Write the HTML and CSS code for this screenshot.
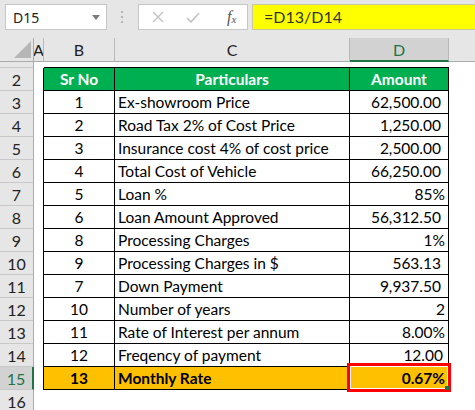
FILE: index.html
```html
<html>
<head>
<meta charset="utf-8">
<link rel="stylesheet" href="styles.css">
</head>
<body>

<div class="topbar">
    <div class="namebox">
        <span>D15</span>
        <svg class="caret" width="8" height="5" viewBox="0 0 8 5"><path d="M0 0h8L4 5z" fill="#7a7a7a"/></svg>
    </div>
    <div class="dots">
        <svg width="3" height="13" viewBox="0 0 3 13"><rect x="0" y="0" width="2" height="2" fill="#b4b4b4"/><rect x="0" y="5" width="2" height="2" fill="#b4b4b4"/><rect x="0" y="10" width="2" height="2" fill="#b4b4b4"/></svg>
    </div>
    <div class="fxbox">
        <svg class="ico" width="12" height="12" viewBox="0 0 12 12"><path d="M1 1L11 11M11 1L1 11" stroke="#c2c2c2" stroke-width="1.4" fill="none"/></svg>
        <svg class="ico" width="14" height="11" viewBox="0 0 14 11"><path d="M1 6L5 10L13 1" stroke="#c2c2c2" stroke-width="1.6" fill="none"/></svg>
        <span class="fx">f<sub>x</sub></span>
    </div>
    <div class="formula">=D13/D14</div>
</div>

<div class="sheet">
    <!-- column headers -->
    <div class="ch corner"><svg width="17" height="17" viewBox="0 0 17 17"><path d="M17 0V17H0z" fill="#b6b6b6"/></svg></div>
    <div class="ch">A</div>
    <div class="ch">B</div>
    <div class="ch">C</div>
    <div class="ch on">D</div>
    <div class="ch rest"></div>

    <!-- row 1 -->
    <div class="rh"></div>
    <div class="c"></div>
    <div class="c top"></div>
    <div class="c top"></div>
    <div class="c top"></div>
    <div class="c"></div>

    <!-- row 2 -->
    <div class="rh">2</div>
    <div class="c edge"></div>
    <div class="c t head mid">Sr No</div>
    <div class="c t head mid">Particulars</div>
    <div class="c t head mid">Amount</div>
    <div class="c"></div>

    <div class="rh">3</div>
    <div class="c edge"></div>
    <div class="c t mid">1</div>
    <div class="c t">Ex-showroom Price</div>
    <div class="c t num acc">62,500.00</div>
    <div class="c"></div>

    <div class="rh">4</div>
    <div class="c edge"></div>
    <div class="c t mid">2</div>
    <div class="c t">Road Tax 2% of Cost Price</div>
    <div class="c t num acc">1,250.00</div>
    <div class="c"></div>

    <div class="rh">5</div>
    <div class="c edge"></div>
    <div class="c t mid">3</div>
    <div class="c t">Insurance cost 4% of cost price</div>
    <div class="c t num acc">2,500.00</div>
    <div class="c"></div>

    <div class="rh">6</div>
    <div class="c edge"></div>
    <div class="c t mid">4</div>
    <div class="c t">Total Cost of Vehicle</div>
    <div class="c t num acc">66,250.00</div>
    <div class="c"></div>

    <div class="rh">7</div>
    <div class="c edge"></div>
    <div class="c t mid">5</div>
    <div class="c t">Loan %</div>
    <div class="c t num">85%</div>
    <div class="c"></div>

    <div class="rh">8</div>
    <div class="c edge"></div>
    <div class="c t mid">6</div>
    <div class="c t">Loan Amount Approved</div>
    <div class="c t num acc">56,312.50</div>
    <div class="c"></div>

    <div class="rh">9</div>
    <div class="c edge"></div>
    <div class="c t mid">8</div>
    <div class="c t">Processing Charges</div>
    <div class="c t num">1%</div>
    <div class="c"></div>

    <div class="rh">10</div>
    <div class="c edge"></div>
    <div class="c t mid">9</div>
    <div class="c t">Processing Charges in $</div>
    <div class="c t num acc">563.13</div>
    <div class="c"></div>

    <div class="rh">11</div>
    <div class="c edge"></div>
    <div class="c t mid">7</div>
    <div class="c t">Down Payment</div>
    <div class="c t num acc">9,937.50</div>
    <div class="c"></div>

    <div class="rh">12</div>
    <div class="c edge"></div>
    <div class="c t mid">10</div>
    <div class="c t">Number of years</div>
    <div class="c t num">2</div>
    <div class="c"></div>

    <div class="rh">13</div>
    <div class="c edge"></div>
    <div class="c t mid">11</div>
    <div class="c t">Rate of Interest per annum</div>
    <div class="c t num">8.00%</div>
    <div class="c"></div>

    <div class="rh">14</div>
    <div class="c edge"></div>
    <div class="c t mid">12</div>
    <div class="c t">Freqency of payment</div>
    <div class="c t num half">12.00</div>
    <div class="c"></div>

    <div class="rh on">15</div>
    <div class="c edge"></div>
    <div class="c t total mid">13</div>
    <div class="c t total">Monthly Rate</div>
    <div class="c t total num sel">0.67%</div>
    <div class="c"></div>

    <div class="rh">16</div>
    <div class="c"></div>
    <div class="c"></div>
    <div class="c"></div>
    <div class="c"></div>
    <div class="c"></div>
</div>

</body>
</html>
```

FILE: styles.css
```css
body, html {
    margin: 0;
    padding: 0;
    width: 475px;
    height: 410px;
    overflow: hidden;
    background: #fff;
    font-family: Lato, "Liberation Sans", sans-serif;
}

/* formula bar */

.topbar {
    height: 38px;
    box-sizing: border-box;
    background: #e6e6e6;
    padding: 4px 0 0 5px;
    display: flex;
    align-items: flex-start;
}

.namebox {
    width: 102px;
    height: 26px;
    box-sizing: border-box;
    background: #fff;
    border: 1px solid #c6c6c6;
    display: flex;
    align-items: center;
    justify-content: space-between;
    padding: 0 6px 0 7px;
    font-family: "Noto Sans", sans-serif;
    font-size: 14px;
    color: #222;
}

.dots {
    width: 31px;
    height: 26px;
    display: flex;
    align-items: center;
    justify-content: center;
}

.fxbox {
    width: 110px;
    height: 26px;
    box-sizing: border-box;
    background: #fff;
    border: 1px solid #c6c6c6;
    display: flex;
    align-items: center;
    padding: 0 0 0 13px;
}

.ico {
    margin-right: 22px;
}

.fx {
    margin-left: 5px;
    font-family: "Liberation Serif", serif;
    font-style: italic;
    font-size: 16px;
    color: #555;
}

.fx sub {
    font-size: 11px;
    vertical-align: -1px;
}

.formula {
    flex: 1;
    margin-left: 4px;
    height: 26px;
    box-sizing: border-box;
    background: #ffff00;
    border: 1px solid #c8c8a0;
    border-right: none;
    padding-left: 11px;
    line-height: 24px;
    font-size: 16px;
    color: #333;
}

/* sheet grid */

.sheet {
    display: grid;
    grid-template-columns: 34px 10px 71px 235px 99px 1fr;
    grid-template-rows: 24px 6px repeat(15, 23px);
    font-size: 15.5px;
    color: #000;
}

.ch {
    background: #e6e6e6;
    border-right: 1px solid #b9b9b9;
    border-bottom: 1px solid #ababab;
    display: flex;
    align-items: center;
    justify-content: center;
    font-size: 16px;
    color: #222;
    overflow: hidden;
}

.ch.corner {
    justify-content: flex-end;
    align-items: flex-end;
    padding: 0 2px 3px 0;
    box-sizing: border-box;
    border-right-color: #ababab;
}

.ch.on {
    background: #d2d2d2;
    color: #217346;
    border-bottom: 2px solid #217346;
}

.ch.rest {
    border-right: none;
}

.rh {
    background: #e6e6e6;
    border-right: 1px solid #ababab;
    border-bottom: 1px solid #c8c8c8;
    display: flex;
    align-items: center;
    justify-content: center;
    font-size: 16px;
    color: #222;
}

.rh.on {
    background: #d2d2d2;
    color: #217346;
    border-right: 2px solid #217346;
}

.c {
    display: flex;
    align-items: flex-end;
    line-height: 20px;
    white-space: nowrap;
}

.c.edge {
    border-right: 1px solid #000;
}

.c.top {
    border-bottom: 1px solid #000;
}

.c.t {
    border-right: 1px solid #000;
    border-bottom: 1px solid #000;
    padding: 0 3px 1px 3px;
}

.mid {
    justify-content: center;
}

.num {
    justify-content: flex-end;
}

.num.acc {
    padding-right: 7px;
}

.num.half {
    padding-right: 5px;
}

.head {
    background: #00b050;
    color: #fff;
    font-weight: bold;
}

.total {
    background: #ffc000;
    font-weight: bold;
}

/* selected cell outline */
.sel {
    position: relative;
}

.sel::after {
    content: "";
    position: absolute;
    top: -4px;
    left: -3px;
    right: -3px;
    bottom: -3px;
    border: 3px solid #ff0000;
    box-shadow: inset 0 0 0 1px #fff;
}

.sel::before {
    content: "";
    position: absolute;
    right: -1px;
    bottom: -1px;
    width: 4px;
    height: 4px;
    background: #217346;
    z-index: 1;
}
```
